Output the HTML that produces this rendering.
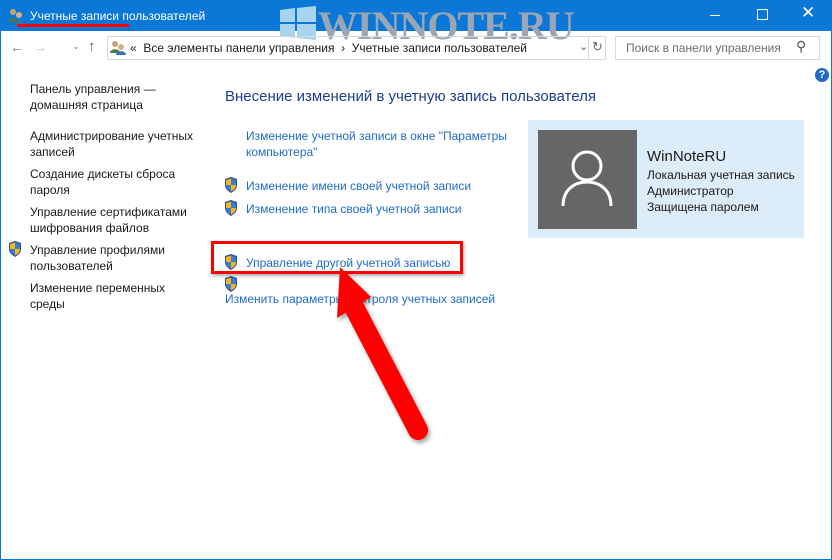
<!DOCTYPE html><html><head><meta charset="utf-8"><style>
body{margin:0;width:832px;height:560px;background:#fff;font-family:"Liberation Sans",sans-serif;font-size:12px;position:relative;overflow:hidden}
.a{position:absolute;white-space:nowrap}
.l{color:#1e6bc9}
.k{color:#1a1a1a}
</style></head><body>
<div class="a" style="left:0;top:0;width:832px;height:31px;background:#0b78d7"></div>
<div class="a" style="left:0;top:0;width:1px;height:560px;background:#0b78d7"></div>
<div class="a" style="left:831px;top:0;width:1px;height:560px;background:#0b78d7"></div>
<div class="a" style="left:0;top:559px;width:832px;height:1px;background:#0b78d7"></div>
<svg class="a" style="left:7px;top:7px" width="18" height="18"><circle cx="6" cy="5" r="3" fill="#c9a37a"/><path d="M1 15c0-5 10-5 10 0z" fill="#4a7a4a"/><circle cx="12" cy="8" r="3" fill="#d8b088"/><path d="M7 17c0-5 10-5 10 0z" fill="#3a70b0"/></svg>
<div class="a" style="left:30px;top:9px;color:#fff;font-size:12px">Учетные записи пользователей</div>
<div class="a" style="left:17px;top:24px;width:112px;height:3px;background:#f00"></div>
<svg class="a" style="left:280px;top:6px" width="36" height="34"><path d="M0 4l15-2v14H0zM17 2l19-2v16H17zM0 18h15v14L0 30zM17 18h19v16l-19-2z" fill="#a8d4ee"/></svg>
<div class="a" style="left:318px;top:2px;font-family:'Liberation Serif',serif;font-size:40px;font-weight:bold;color:#9aa6b4;letter-spacing:-1px">WINNOTE.RU</div>
<div class="a" style="left:710px;top:15px;width:10px;height:1px;background:#fff"></div>
<div class="a" style="left:757px;top:9px;width:9px;height:9px;border:1px solid #fff"></div>
<div class="a" style="left:801px;top:3px;color:#fff;font-size:17px">✕</div>
<div class="a" style="left:10px;top:39px;color:#7a7a7a;font-size:14px">←</div>
<div class="a" style="left:33px;top:39px;color:#c8c8c8;font-size:14px">→</div>
<div class="a" style="left:72px;top:41px;color:#7a7a7a;font-size:9px">⌄</div>
<div class="a" style="left:88px;top:38px;color:#555;font-size:15px">↑</div>
<div class="a" style="left:107px;top:36px;width:497px;height:22px;border:1px solid #d9d9d9"></div>
<svg class="a" style="left:110px;top:39px" width="16" height="16"><circle cx="5" cy="5" r="3" fill="#c9a37a"/><path d="M0 14c0-5 10-5 10 0z" fill="#4a7a4a"/><circle cx="11" cy="8" r="3" fill="#d8b088"/><path d="M6 16c0-5 10-5 10 0z" fill="#3a70b0"/></svg>
<div class="a k" style="left:130px;top:41px">«&nbsp; Все элементы панели управления &nbsp;›&nbsp; Учетные записи пользователей</div>
<div class="a" style="left:579px;top:40px;color:#666;font-size:11px">⌄</div>
<div class="a" style="left:588px;top:36px;width:1px;height:24px;background:#d9d9d9"></div>
<div class="a" style="left:592px;top:39px;color:#666;font-size:13px">↻</div>
<div class="a" style="left:615px;top:36px;width:203px;height:22px;border:1px solid #d9d9d9"></div>
<div class="a" style="left:626px;top:41px;color:#6d6d6d">Поиск в панели управления</div>
<div class="a" style="left:796px;top:38px;color:#555;font-size:14px">⚲</div>
<div class="a" style="left:815px;top:68px;width:14px;height:14px;border-radius:50%;background:#1e6bc9;color:#fff;font-size:11px;text-align:center;line-height:14px;font-weight:bold">?</div>
<div class="a k" style="left:30px;top:81px;line-height:16px">Панель управления —<br>домашняя страница</div>
<div class="a k" style="left:30px;top:128px;line-height:16px">Администрирование учетных<br>записей</div>
<div class="a k" style="left:30px;top:166px;line-height:16px">Создание дискеты сброса<br>пароля</div>
<div class="a k" style="left:30px;top:204px;line-height:16px">Управление сертификатами<br>шифрования файлов</div>
<div class="a k" style="left:30px;top:242px;line-height:16px">Управление профилями<br>пользователей</div>
<div class="a k" style="left:30px;top:280px;line-height:16px">Изменение переменных<br>среды</div>
<div class="a" style="left:225px;top:88px;font-size:15px;color:#1a3e8c">Внесение изменений в учетную запись пользователя</div>
<div class="a l" style="left:246px;top:128px;line-height:16px">Изменение учетной записи в окне "Параметры<br>компьютера"</div>
<div class="a l" style="left:246px;top:179px">Изменение имени своей учетной записи</div>
<div class="a l" style="left:246px;top:202px">Изменение типа своей учетной записи</div>
<div class="a l" style="left:246px;top:256px">Управление другой учетной записью</div>
<div class="a l" style="left:225px;top:292px">Изменить параметры контроля учетных записей</div>
<svg width="0" height="0" style="position:absolute"><defs><g id="sh"><path d="M7 0L13 2V8C13 12 10 14 7 16C4 14 1 12 1 8V2Z" fill="#2f4f8f"/><path d="M7 1.5V8H12C12 11 10 13 7 14.5ZM7 1.5L2 3V8H7Z" fill="#f3b718"/><path d="M7 1.5L12 3V8H7ZM2 8H7V14.5C4 13 2 11 2 8Z" fill="#3a7bd5"/></g></defs></svg>
<svg class="a" style="left:8px;top:241px" width="14" height="16"><use href="#sh"/></svg>
<svg class="a" style="left:224px;top:177px" width="14" height="16"><use href="#sh"/></svg>
<svg class="a" style="left:224px;top:200px" width="14" height="16"><use href="#sh"/></svg>
<svg class="a" style="left:224px;top:254px" width="14" height="16"><use href="#sh"/></svg>
<svg class="a" style="left:224px;top:276px" width="14" height="16"><use href="#sh"/></svg>
<div class="a" style="left:211px;top:241px;width:252px;height:33px;border:3px solid #f00;box-sizing:border-box;box-shadow:1px 2px 3px rgba(0,0,0,.3)"></div>
<svg class="a" style="left:300px;top:250px" width="150" height="200"><g style="filter:drop-shadow(2px 3px 2px rgba(0,0,0,.35))"><path d="M53 55L118 180" stroke="#f00" stroke-width="20" stroke-linecap="round"/><path d="M40 17L37 68L71 47Z" fill="#f00"/></g></svg>
<div class="a" style="left:528px;top:120px;width:276px;height:118px;background:#dcecf9"></div>
<div class="a" style="left:538px;top:130px;width:99px;height:99px;background:#666"></div>
<svg class="a" style="left:558px;top:148px" width="58" height="60"><circle cx="29" cy="18" r="14" fill="none" stroke="#fff" stroke-width="3"/><path d="M5 58C5 42 16 34 29 34S53 42 53 58" fill="none" stroke="#fff" stroke-width="3"/></svg>
<div class="a k" style="left:647px;top:148px;font-size:15px">WinNoteRU</div>
<div class="a k" style="left:647px;top:167px;line-height:16px">Локальная учетная запись<br>Администратор<br>Защищена паролем</div>
</body></html>
